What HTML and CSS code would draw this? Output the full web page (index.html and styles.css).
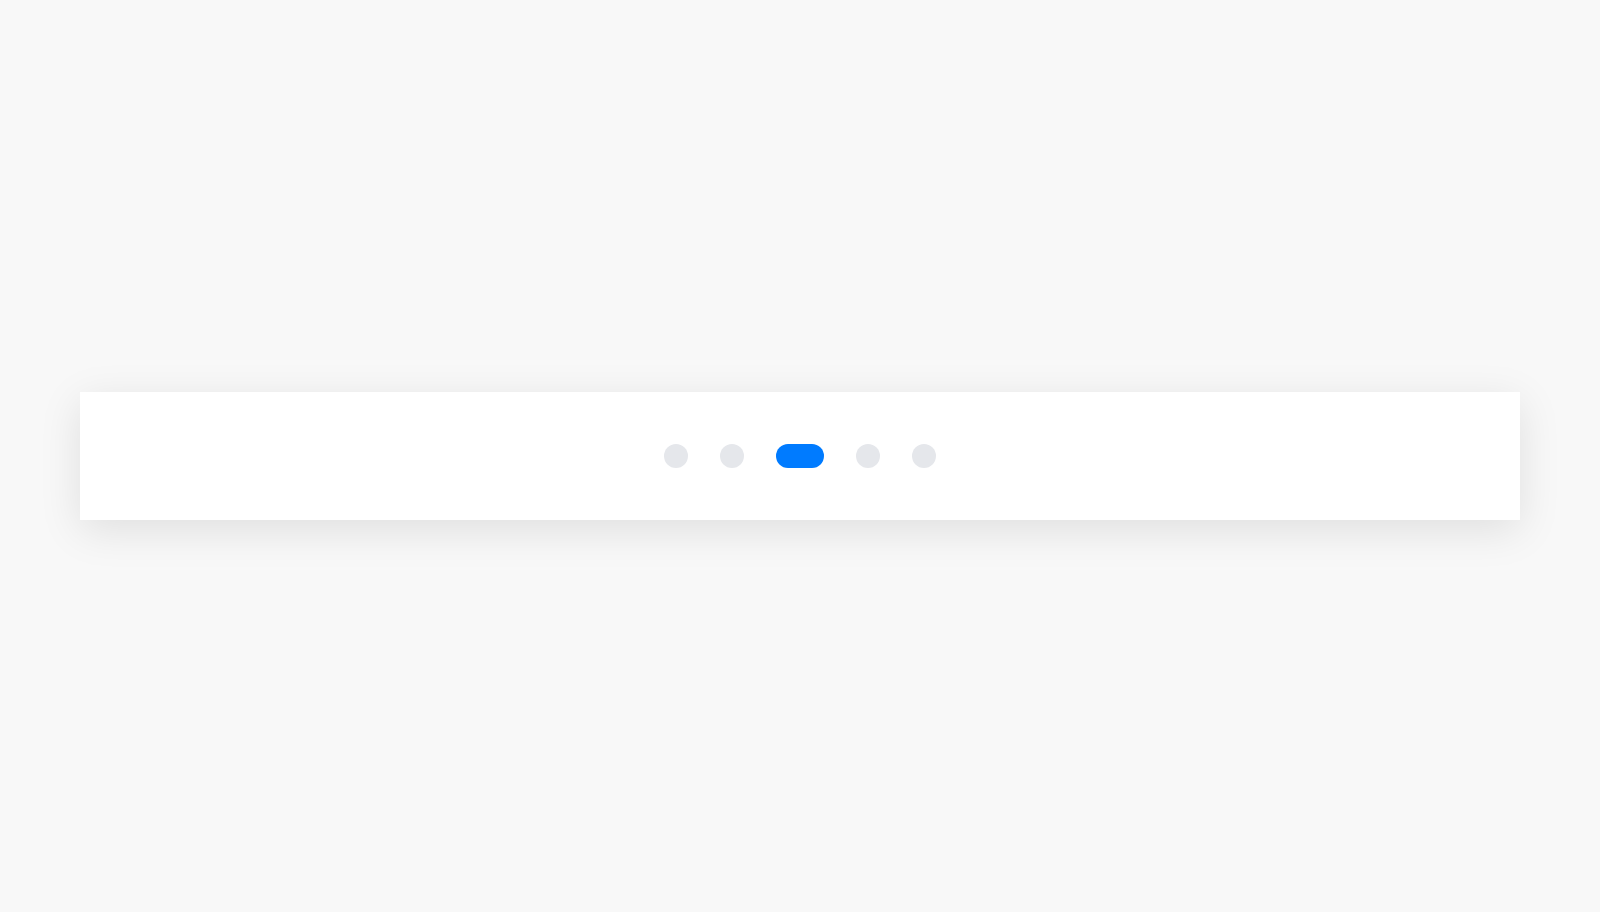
FILE: index.html
```html
<!DOCTYPE html>
<html lang="en">
<head>
<meta charset="utf-8">
<title>Pagination dots</title>
<link rel="stylesheet" href="styles.css">
</head>
<body>
<div class="card">
  <div class="dots">
    <span class="dot"></span>
    <span class="dot"></span>
    <span class="dot active"></span>
    <span class="dot"></span>
    <span class="dot"></span>
  </div>
</div>
</body>
</html>
```

FILE: styles.css
```css
html, body {
  margin: 0;
  padding: 0;
  height: 100%;
}
body {
  background: #f8f8f8;
  font-family: "Liberation Sans", Arial, sans-serif;
  display: flex;
  align-items: center;
  padding: 0 80px;
  box-sizing: border-box;
}
.card {
  flex: 1;
  height: 128px;
  background: #ffffff;
  box-shadow: 0 10px 40px rgba(0, 0, 0, 0.1);
  display: flex;
  align-items: center;
  justify-content: center;
}
.dots {
  display: flex;
  gap: 32px;
  align-items: center;
}
.dot {
  display: block;
  width: 24px;
  height: 24px;
  border-radius: 12px;
  background: #e5e7eb;
}
.dot.active {
  width: 48px;
  background: #007bff;
}
```
